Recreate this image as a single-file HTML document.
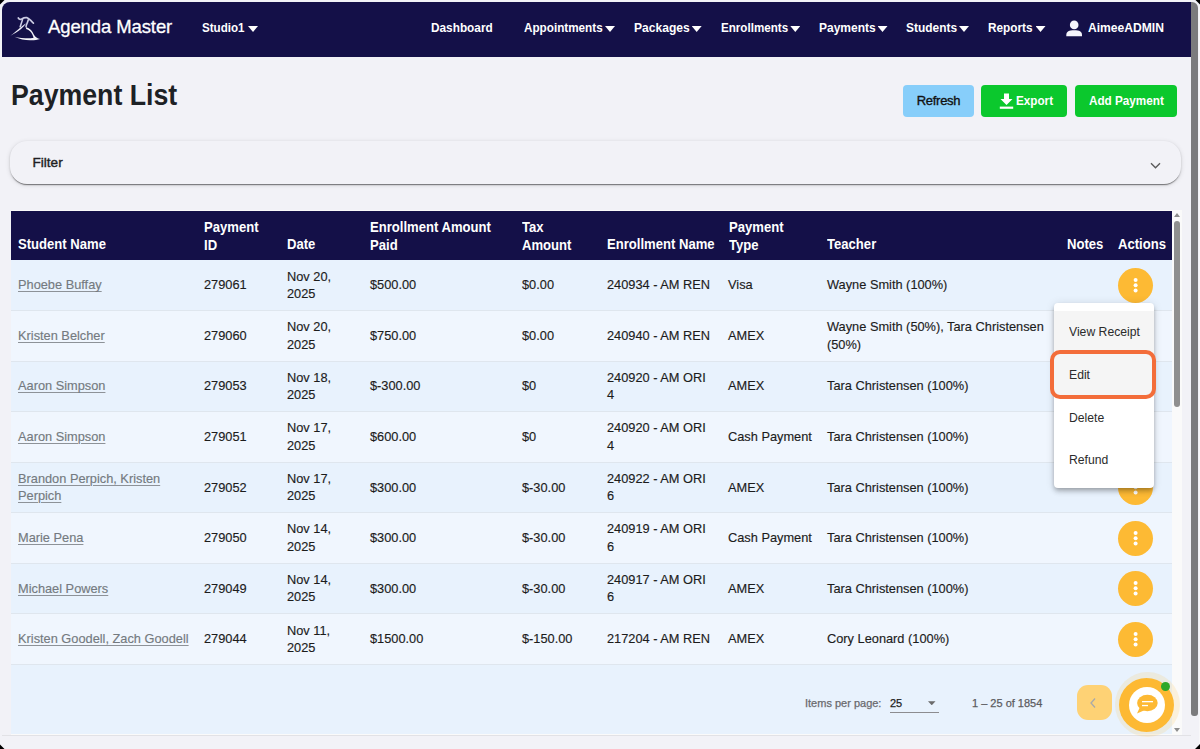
<!DOCTYPE html>
<html><head><meta charset="utf-8">
<style>
*{box-sizing:border-box;margin:0;padding:0}
html,body{width:1200px;height:749px;overflow:hidden}
body{position:relative;background:#f2f2f7;font-family:"Liberation Sans",sans-serif;color:#1f1f1f}
.abs{position:absolute}
/* navbar */
#nav{left:2px;top:2px;width:1189.5px;height:54.5px;background:#141048;border-top-left-radius:8px}
.nv{position:absolute;top:1px;height:54px;line-height:54px;color:#fff;font-weight:bold;font-size:13.5px;white-space:nowrap;transform-origin:0 50%}
.car{position:absolute;top:26px;width:10px;height:6px;background:#fff;clip-path:polygon(0 0,100% 0,50% 100%)}
#brand{left:48px;top:0;height:54px;line-height:54px;color:#fff;font-size:18.5px;white-space:nowrap;letter-spacing:-0.1px;-webkit-text-stroke:0.3px #fff}
/* title */
#title{left:10.5px;top:78.2px;font-size:29.5px;font-weight:bold;color:#1d2125;white-space:nowrap;transform:scaleX(0.905);transform-origin:0 0}
.btn{position:absolute;top:85px;height:32.4px;border-radius:4px;font-size:13px;font-weight:bold;line-height:32px;text-align:center;white-space:nowrap;letter-spacing:-0.5px}
/* filter */
#filter{left:10px;top:141px;width:1171px;height:43px;border-radius:17px;background:#f2f2f7;box-shadow:0 2px 1px -1px rgba(0,0,0,.4),0 1px 2px 0 rgba(0,0,0,.16),0 1px 5px 0 rgba(0,0,0,.12)}
/* table */
#tbl{left:11px;top:210px;width:1171px;height:524.5px;background:#fafafa}
#thead{left:11px;top:211px;width:1161px;height:49px;background:#141048}
.th{position:absolute;color:#fff;font-weight:bold;font-size:14px;line-height:18px;white-space:nowrap;transform:scaleX(0.935);transform-origin:0 0}
.row{position:absolute;left:11px;width:1161px;height:50.6px;border-top:1px solid #dfe6ee}
.r1{background:#e8f2fd}.r2{background:#f0f6fe}
.td{position:absolute;font-size:13.4px;line-height:17.3px;color:#1c1c1c;-webkit-text-stroke:0.15px currentColor;white-space:nowrap;transform:scaleX(0.955);transform-origin:0 0}
.lnk{color:#747a80;text-decoration:underline;text-decoration-thickness:1px;text-underline-offset:1.6px;text-decoration-color:#8d9298}
.dots{position:absolute;left:1118px;width:35px;height:35px;border-radius:50%;background:#fdba34}
.dots circle{fill:#fff}

.ft{position:absolute;font-size:11px;color:#6a6a6e;white-space:nowrap;letter-spacing:0px;-webkit-text-stroke:0.25px currentColor}
#menu{left:1054px;top:303px;width:100px;height:185px;background:#fff;border-radius:4px;box-shadow:0 2px 4px -1px rgba(0,0,0,.2),0 4px 5px 0 rgba(0,0,0,.14),0 1px 10px 0 rgba(0,0,0,.12)}
.mi{position:absolute;left:1069px;font-size:13.4px;color:#2b2b2b;white-space:nowrap;transform:scaleX(0.91);transform-origin:0 0}
</style></head><body>
<div id="nav" class="abs"></div>
<div id="brand" class="abs">Agenda Master</div>
<div class="nv" style="left:201.9px;transform:scaleX(0.86)">Studio1</div>
<div class="car" style="left:248px"></div>
<div class="nv" style="left:431.4px;transform:scaleX(0.875)">Dashboard</div>
<div class="nv" style="left:523.8px;transform:scaleX(0.867)">Appointments</div>
<div class="car" style="left:605px"></div>
<div class="nv" style="left:633.8px;transform:scaleX(0.895)">Packages</div>
<div class="car" style="left:691.7px"></div>
<div class="nv" style="left:720.6px;transform:scaleX(0.86)">Enrollments</div>
<div class="car" style="left:790.3px"></div>
<div class="nv" style="left:818.8px;transform:scaleX(0.889)">Payments</div>
<div class="car" style="left:877.5px"></div>
<div class="nv" style="left:906.4px;transform:scaleX(0.884)">Students</div>
<div class="car" style="left:959px"></div>
<div class="nv" style="left:988.1px;transform:scaleX(0.874)">Reports</div>
<div class="car" style="left:1035.5px"></div>
<div class="nv" style="left:1088.1px;transform:scaleX(0.896)">AimeeADMIN</div>

<div id="title" class="abs">Payment List</div>
<div class="btn" style="left:903px;width:71px;background:#87cefa;color:#111;font-weight:normal;-webkit-text-stroke:0.35px #111;letter-spacing:-0.3px">Refresh</div>
<div class="btn" style="left:981px;width:86px;background:#0bc82d"></div><div class="abs" style="left:1016.3px;top:85px;line-height:32px;font-size:13px;font-weight:bold;color:#fff;transform:scaleX(0.9);transform-origin:0 0">Export</div>
<div class="btn" style="left:1075px;width:102px;background:#0bc82d"></div><div class="abs" style="left:1088.8px;top:85px;line-height:32px;font-size:13px;font-weight:bold;color:#fff;transform:scaleX(0.901);transform-origin:0 0">Add Payment</div>

<div id="filter" class="abs"></div>

<div id="tbl" class="abs"></div>
<div id="thead" class="abs"></div>

<div class="th" style="left:18px;top:234.7px">Student Name</div>
<div class="th" style="left:204px;top:217.7px">Payment<br>ID</div>
<div class="th" style="left:286.5px;top:234.7px">Date</div>
<div class="th" style="left:370px;top:217.7px">Enrollment Amount<br>Paid</div>
<div class="th" style="left:522px;top:217.7px">Tax<br>Amount</div>
<div class="th" style="left:607px;top:234.7px">Enrollment Name</div>
<div class="th" style="left:728.5px;top:217.7px">Payment<br>Type</div>
<div class="th" style="left:827px;top:234.7px">Teacher</div>
<div class="th" style="left:1067px;top:234.7px">Notes</div>
<div class="th" style="left:1118px;top:234.7px">Actions</div>
<div class="row r1" style="top:260px;border-top:0"></div>
<div class="td" style="left:18px;top:276.33px"><span class="lnk">Phoebe Buffay</span></div>
<div class="td" style="left:204px;top:276.33px">279061</div>
<div class="td" style="left:286.5px;top:267.68px">Nov 20,<br>2025</div>
<div class="td" style="left:370px;top:276.33px">$500.00</div>
<div class="td" style="left:522px;top:276.33px">$0.00</div>
<div class="td" style="left:607px;top:276.33px">240934 - AM REN</div>
<div class="td" style="left:728px;top:276.33px">Visa</div>
<div class="td" style="left:827px;top:276.33px">Wayne Smith (100%)</div>
<div class="dots" style="top:267.78px"><svg width="35" height="35" style="position:absolute;left:0;top:0"><circle cx="17.6" cy="11.9" r="2"/><circle cx="17.6" cy="17.25" r="2"/><circle cx="17.6" cy="22.6" r="2"/></svg></div>
<div class="row r2" style="top:310.06px"></div>
<div class="td" style="left:18px;top:326.89px"><span class="lnk">Kristen Belcher</span></div>
<div class="td" style="left:204px;top:326.89px">279060</div>
<div class="td" style="left:286.5px;top:318.24px">Nov 20,<br>2025</div>
<div class="td" style="left:370px;top:326.89px">$750.00</div>
<div class="td" style="left:522px;top:326.89px">$0.00</div>
<div class="td" style="left:607px;top:326.89px">240940 - AM REN</div>
<div class="td" style="left:728px;top:326.89px">AMEX</div>
<div class="td" style="left:827px;top:318.24px">Wayne Smith (50%), Tara Christensen<br>(50%)</div>
<div class="dots" style="top:318.34px"><svg width="35" height="35" style="position:absolute;left:0;top:0"><circle cx="17.6" cy="11.9" r="2"/><circle cx="17.6" cy="17.25" r="2"/><circle cx="17.6" cy="22.6" r="2"/></svg></div>
<div class="row r1" style="top:360.62px"></div>
<div class="td" style="left:18px;top:377.45px"><span class="lnk">Aaron Simpson</span></div>
<div class="td" style="left:204px;top:377.45px">279053</div>
<div class="td" style="left:286.5px;top:368.80px">Nov 18,<br>2025</div>
<div class="td" style="left:370px;top:377.45px">$-300.00</div>
<div class="td" style="left:522px;top:377.45px">$0</div>
<div class="td" style="left:607px;top:368.80px">240920 - AM ORI<br>4</div>
<div class="td" style="left:728px;top:377.45px">AMEX</div>
<div class="td" style="left:827px;top:377.45px">Tara Christensen (100%)</div>
<div class="dots" style="top:368.90px"><svg width="35" height="35" style="position:absolute;left:0;top:0"><circle cx="17.6" cy="11.9" r="2"/><circle cx="17.6" cy="17.25" r="2"/><circle cx="17.6" cy="22.6" r="2"/></svg></div>
<div class="row r2" style="top:411.18px"></div>
<div class="td" style="left:18px;top:428.01px"><span class="lnk">Aaron Simpson</span></div>
<div class="td" style="left:204px;top:428.01px">279051</div>
<div class="td" style="left:286.5px;top:419.36px">Nov 17,<br>2025</div>
<div class="td" style="left:370px;top:428.01px">$600.00</div>
<div class="td" style="left:522px;top:428.01px">$0</div>
<div class="td" style="left:607px;top:419.36px">240920 - AM ORI<br>4</div>
<div class="td" style="left:728px;top:428.01px">Cash Payment</div>
<div class="td" style="left:827px;top:428.01px">Tara Christensen (100%)</div>
<div class="dots" style="top:419.46px"><svg width="35" height="35" style="position:absolute;left:0;top:0"><circle cx="17.6" cy="11.9" r="2"/><circle cx="17.6" cy="17.25" r="2"/><circle cx="17.6" cy="22.6" r="2"/></svg></div>
<div class="row r1" style="top:461.74px"></div>
<div class="td" style="left:18px;top:469.92px"><span class="lnk">Brandon Perpich, Kristen</span><br><span class="lnk">Perpich</span></div>
<div class="td" style="left:204px;top:478.57px">279052</div>
<div class="td" style="left:286.5px;top:469.92px">Nov 17,<br>2025</div>
<div class="td" style="left:370px;top:478.57px">$300.00</div>
<div class="td" style="left:522px;top:478.57px">$-30.00</div>
<div class="td" style="left:607px;top:469.92px">240922 - AM ORI<br>6</div>
<div class="td" style="left:728px;top:478.57px">AMEX</div>
<div class="td" style="left:827px;top:478.57px">Tara Christensen (100%)</div>
<div class="dots" style="top:470.02px"><svg width="35" height="35" style="position:absolute;left:0;top:0"><circle cx="17.6" cy="11.9" r="2"/><circle cx="17.6" cy="17.25" r="2"/><circle cx="17.6" cy="22.6" r="2"/></svg></div>
<div class="row r2" style="top:512.30px"></div>
<div class="td" style="left:18px;top:529.13px"><span class="lnk">Marie Pena</span></div>
<div class="td" style="left:204px;top:529.13px">279050</div>
<div class="td" style="left:286.5px;top:520.48px">Nov 14,<br>2025</div>
<div class="td" style="left:370px;top:529.13px">$300.00</div>
<div class="td" style="left:522px;top:529.13px">$-30.00</div>
<div class="td" style="left:607px;top:520.48px">240919 - AM ORI<br>6</div>
<div class="td" style="left:728px;top:529.13px">Cash Payment</div>
<div class="td" style="left:827px;top:529.13px">Tara Christensen (100%)</div>
<div class="dots" style="top:520.58px"><svg width="35" height="35" style="position:absolute;left:0;top:0"><circle cx="17.6" cy="11.9" r="2"/><circle cx="17.6" cy="17.25" r="2"/><circle cx="17.6" cy="22.6" r="2"/></svg></div>
<div class="row r1" style="top:562.86px"></div>
<div class="td" style="left:18px;top:579.69px"><span class="lnk">Michael Powers</span></div>
<div class="td" style="left:204px;top:579.69px">279049</div>
<div class="td" style="left:286.5px;top:571.04px">Nov 14,<br>2025</div>
<div class="td" style="left:370px;top:579.69px">$300.00</div>
<div class="td" style="left:522px;top:579.69px">$-30.00</div>
<div class="td" style="left:607px;top:571.04px">240917 - AM ORI<br>6</div>
<div class="td" style="left:728px;top:579.69px">AMEX</div>
<div class="td" style="left:827px;top:579.69px">Tara Christensen (100%)</div>
<div class="dots" style="top:571.14px"><svg width="35" height="35" style="position:absolute;left:0;top:0"><circle cx="17.6" cy="11.9" r="2"/><circle cx="17.6" cy="17.25" r="2"/><circle cx="17.6" cy="22.6" r="2"/></svg></div>
<div class="row r2" style="top:613.42px"></div>
<div class="td" style="left:18px;top:630.25px"><span class="lnk">Kristen Goodell, Zach Goodell</span></div>
<div class="td" style="left:204px;top:630.25px">279044</div>
<div class="td" style="left:286.5px;top:621.60px">Nov 11,<br>2025</div>
<div class="td" style="left:370px;top:630.25px">$1500.00</div>
<div class="td" style="left:522px;top:630.25px">$-150.00</div>
<div class="td" style="left:607px;top:630.25px">217204 - AM REN</div>
<div class="td" style="left:728px;top:630.25px">AMEX</div>
<div class="td" style="left:827px;top:630.25px">Cory Leonard (100%)</div>
<div class="dots" style="top:621.70px"><svg width="35" height="35" style="position:absolute;left:0;top:0"><circle cx="17.6" cy="11.9" r="2"/><circle cx="17.6" cy="17.25" r="2"/><circle cx="17.6" cy="22.6" r="2"/></svg></div>
<div class="abs" style="left:11px;top:663.9px;width:1161px;height:70.6px;background:#e8f2fd;border-top:1px solid #dfe6ee"></div>
<div class="ft" style="left:805px;top:696.8px">Items per page:</div>
<div class="ft" style="left:890px;top:696.8px;color:#222">25</div>
<div class="abs" style="left:928px;top:701.2px;width:7.5px;height:4px;background:#6b6b6b;clip-path:polygon(0 0,100% 0,50% 100%)"></div>
<div class="abs" style="left:890px;top:711.5px;width:49px;height:1px;background:#8c8c90"></div>
<div class="ft" style="left:972px;top:696.8px;color:#5c5c60">1 – 25 of 1854</div>
<div class="abs" style="left:1077px;top:685px;width:35px;height:35px;border-radius:11px;background:#fed275"></div>
<svg class="abs" style="left:1088px;top:697px" width="10" height="12" viewBox="0 0 10 12"><path d="M7 1.5 L3 6 L7 10.5" fill="none" stroke="#a9a9a9" stroke-width="1.3"/></svg>
<div id="menu" class="abs"></div>
<div class="abs" style="left:1054px;top:311px;width:100px;height:85.4px;background:#f5f5f5"></div>
<div class="abs" style="left:1050px;top:350px;width:106px;height:49px;border:4px solid #f36d3a;border-radius:10px"></div>
<div class="mi" style="left:1069px;top:324px">View Receipt</div>
<div class="mi" style="top:367px">Edit</div>
<div class="mi" style="top:410px">Delete</div>
<div class="mi" style="top:452px">Refund</div>


<div class="abs" style="left:32.5px;top:155px;font-size:13.6px;font-weight:normal;-webkit-text-stroke:0.4px #1f1f23;color:#1f1f23;letter-spacing:0px">Filter</div>
<svg class="abs" style="left:1149px;top:161px" width="13" height="9" viewBox="0 0 13 9"><path d="M2 2.2 L6.5 6.7 L11 2.2" fill="none" stroke="#5a5a5a" stroke-width="1.35"/></svg>
<!-- logo -->
<svg class="abs" style="left:0;top:0" width="50" height="50" viewBox="0 0 50 50">
 <path d="M10.4 35.7 C14 33 17.5 30.2 20.4 27.5 C22.4 25.8 24.2 24.4 26 23.3 C24.9 25.3 23.1 27.3 21.1 29 C17.6 31.8 14 34 10.4 35.7 Z" fill="#ececf6"/>
 <path d="M18.3 18 C19.1 19.4 20.3 19.6 21.6 18.9 C23 18.1 24.9 17.3 26.8 17.6 C28.6 18 30 19.9 31.4 21.2 C32.2 22 32.8 22.6 33.4 23.1" fill="none" stroke="#cdcde4" stroke-width="1.7" stroke-linecap="round"/>
 <path d="M22.5 19.6 C21.8 22 21 24.3 20.2 26.8" fill="none" stroke="#cdcde4" stroke-width="1.6" stroke-linecap="round"/>
 <path d="M28.3 19.8 C27.8 21.8 27 23.5 26.4 25 C26.2 25.8 26 26.3 26.1 26.8" fill="none" stroke="#cdcde4" stroke-width="1.6" stroke-linecap="round"/>
 <path d="M26.1 27.3 C29 28.1 31.6 30 32.8 32.4 C33.8 34.4 34.6 36.2 36.5 37.4 C37.5 38.1 38.6 38.6 40 38.9 C37 40 34 40.3 30 40.2 C25 40.1 19.5 39.4 14.5 36.8 C19 37.9 25 38.4 31 38.3 C32.5 38.2 33.3 38 33.6 37.6 C32.8 35.5 32.2 33.8 31.2 32.4 C29.8 30.6 28 29.4 26.1 29 Z" fill="#f4f4fa"/>
</svg>
<!-- user icon -->
<svg class="abs" style="left:1066px;top:20px" width="17" height="17" viewBox="0 0 17 17">
 <circle cx="8.2" cy="4.9" r="4.3" fill="#f4f4fb"/>
 <path d="M0.3 16.3 V15 C0.3 11.6 3 10.2 8.2 10.2 C13.4 10.2 16 11.6 16 15 V16.3 Z" fill="#f4f4fb"/>
</svg>
<!-- export icon -->
<svg class="abs" style="left:999px;top:93px" width="15" height="16" viewBox="0 0 15 16">
 <path d="M5 0.5 H10 V6 H13.5 L7.5 12 L1.5 6 H5 Z" fill="#fff"/>
 <rect x="0.8" y="13.6" width="13.4" height="2.2" fill="#fff"/>
</svg>
<!-- page scrollbar -->
<div class="abs" style="left:1191.2px;top:2px;width:7px;height:714px;background:#7b7b7d;border-radius:0 6px 3px 3px"></div>
<div class="abs" style="left:1198.5px;top:0;width:1.5px;height:749px;background:#f8f8fa"></div>
<!-- inner scrollbar -->
<div class="abs" style="left:1172px;top:210px;width:9.5px;height:525px;background:#fafafa"></div>
<div class="abs" style="left:1173.5px;top:213px;width:0;height:0;border-left:3.5px solid transparent;border-right:3.5px solid transparent;border-bottom:4px solid #8c8c8c"></div>
<div class="abs" style="left:1174px;top:221px;width:5.5px;height:186px;background:#8f8f8f;border-radius:3px"></div>
<div class="abs" style="left:1173.5px;top:728px;width:0;height:0;border-left:3.5px solid transparent;border-right:3.5px solid transparent;border-top:4px solid #8c8c8c"></div>
<div class="abs" style="left:2px;top:734.5px;width:1189px;height:1px;background:#e2e2e6"></div>
<!-- chat widget -->
<div class="abs" style="left:1115px;top:672px;width:65px;height:65px;border-radius:50%;background:rgba(253,185,51,0.15)"></div>
<div class="abs" style="left:1119px;top:678px;width:55px;height:54px;border-radius:50%;background:#fdb933"></div>
<div class="abs" style="left:1129px;top:686.5px;width:36px;height:36px;border-radius:50%;background:#fff"></div>
<svg class="abs" style="left:1136px;top:694px" width="23" height="21" viewBox="0 0 23 21">
 <ellipse cx="11.4" cy="9" rx="10.3" ry="8.2" fill="#fdb933"/>
 <path d="M4 13 L1 19.5 L9 16 Z" fill="#fdb933"/>
 <rect x="6" y="7" width="11" height="1.3" fill="#fff"/>
 <rect x="6" y="10.9" width="6" height="1.3" fill="#fff"/>
</svg>
<div class="abs" style="left:1161px;top:681.5px;width:9px;height:9px;border-radius:50%;background:#2ea82a"></div>
<svg class="abs" style="left:0;top:0" width="1200" height="749" viewBox="0 0 1200 749">
 <path d="M0 0 H4.5 L0 4.5 Z M1195.5 0 H1200 V4.5 Z M0 744.5 L4.5 749 H0 Z M1200 744 V749 H1195 Z" fill="#000"/>
</svg>
</body></html>
